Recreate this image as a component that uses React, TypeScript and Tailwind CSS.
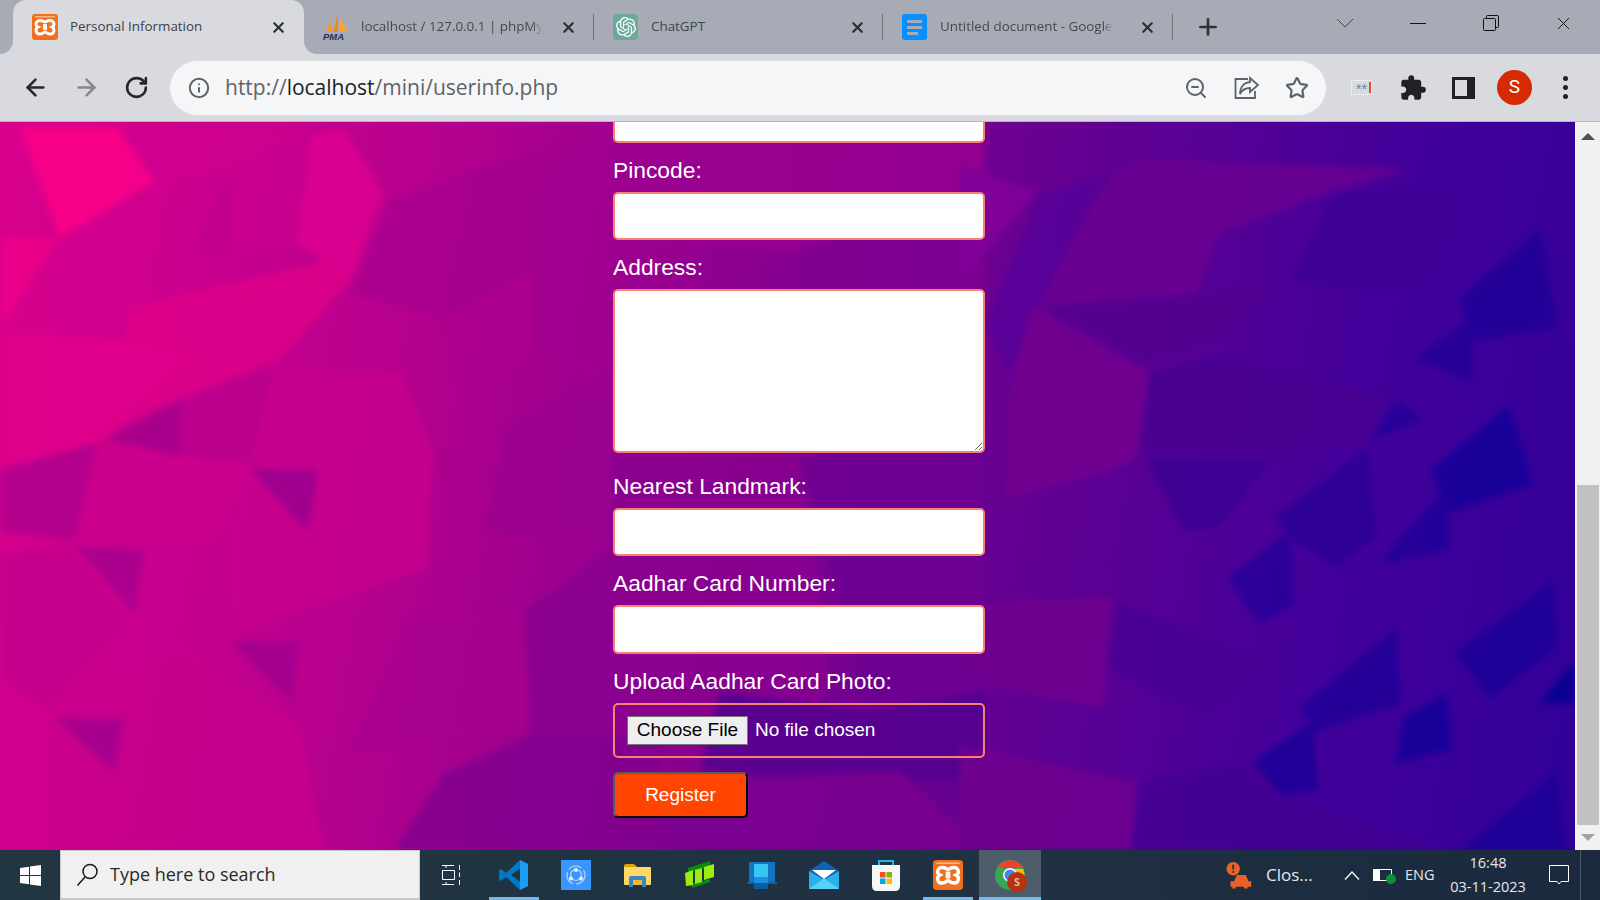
import type { ReactNode } from 'react';
import { ArrowLeft, ArrowRight, Info, Plus, RotateCw, Star, X, ZoomOut } from 'lucide-react';
import { MdExtension } from 'react-icons/md';
import { SiOpenai } from 'react-icons/si';

const uiFont = "font-['Open_Sans','Noto_Sans',sans-serif]";

// page background: [points, colour]
const shards: [string, string][] = [
  // mid tone facets
  ['117,5 323,5 233,47 154,60', '#d0008f'],
  ['230,47 323,14 296,121 230,130', '#ca008e'],
  ['191,130 230,51 230,130', '#c0008e'],
  ['54,135 146,79 125,205 51,207', '#d0008e'],
  ['475,47 610,9 610,261 440,196', '#a2008f'],
  ['440,196 531,149 531,233 444,261', '#ad0090'],
  ['506,303 610,251 610,419 486,410', '#9a0090'],
  ['409,493 525,489 529,610 350,629', '#a8008f'],
  ['97,321 249,345 218,419 74,419', '#cc008c'],
  ['272,247 400,251 432,326 428,447 233,512 226,419 249,345', '#c8008e'],
  ['50,596 179,521 300,605 323,729 50,729', '#c8008c'],
  ['0,430 70,424 130,500 50,590 0,560', '#c4008c'],
  ['610,0 985,0 985,70 830,130 620,120', '#9c0090'],
  ['800,125 985,80 985,330 800,330', '#7f0090'],
  ['610,330 800,340 830,560 740,720 610,720', '#8a0090'],
  ['800,340 985,280 985,620 880,620', '#6d0092'],
  ['720,570 870,590 985,570 985,660 810,660 700,650', '#52008f'],
  ['620,660 900,650 985,729 640,729', '#7a0090'],
  // the strong shapes
  ['19,5 117,5 154,60 58,116', '#ff0088'],
  ['0,116 58,116 0,205', '#f00088'],
  ['128,186 342,135 350,158 280,237 109,303', '#e00088'],
  ['0,210 148,219 195,233 100,320 0,345', '#e2008a'],
  ['311,14 342,5 383,70 350,158 296,121', '#e00090'],
  ['249,347 317,349 307,410', '#98008f'],
  ['74,424 144,428 134,493', '#a5008f'],
  ['230,520 298,520 292,582', '#a0008f'],
  ['54,596 123,598 113,652', '#a0008f'],
  ['105,317 179,279 179,335', '#a0008c'],
  ['179,279 272,247 249,340 179,335', '#b8008d'],
  ['0,349 97,321 74,419 0,410', '#ad008d'],
  ['350,172 440,196 475,47 389,79', '#a8008f'],
  ['525,489 610,428 610,615 529,615', '#880090'],
  ['444,652 529,615 660,615 660,730 393,730', '#80008f'],
  ['960,42 1036,70 960,163', '#85009a'],
  ['1142,37 1412,47 1330,70 1220,112 1197,172 1040,182 1110,56', '#6c0090'],
  ['1040,74 1110,51 1036,186 1009,251 985,205', '#55009a'],
  ['1334,74 1471,60 1432,154 1377,172 1291,158', '#3d0095'],
  ['1044,186 1271,168 1216,219 1142,242', '#52008f'],
  ['1032,186 1150,251 1138,335 1114,349 1005,377 1012,261', '#75008f'],
  ['1150,251 1216,233 1385,275 1369,321 1271,335 1142,330', '#480090'],
  ['1146,335 1271,340 1220,405 1185,410', '#3a0092'],
  ['1275,396 1369,326 1377,414 1338,447 1295,419', '#2a0096'],
  ['1228,456 1291,410 1295,484 1260,503', '#25009a'],
  ['1432,349 1510,284 1534,363 1448,391', '#12009a'],
  ['1381,442 1448,363 1450,428', '#1e009a'],
  ['1460,177 1542,107 1558,205 1475,219', '#1e0098'],
  ['1416,237 1473,196 1473,261', '#220098'],
  ['1299,587 1397,507 1401,582 1318,610', '#1f0098'],
  ['1256,638 1314,600 1318,670 1267,675', '#180098'],
  ['1456,531 1554,461 1558,526 1491,577', '#1a0098'],
  ['1542,582 1575,540 1575,582', '#000090'],
  ['1405,596 1448,573 1452,628 1397,642', '#10009a'],
  ['1460,730 1558,652 1565,730', '#1a0098'],
  ['1373,317 1397,279 1424,298', '#20009a'],
  ['960,484 1114,475 1103,587 960,559', '#72008f'],
  ['960,624 1138,661 1130,730 960,730', '#72008f'],
  ['1118,480 1267,540 1205,596 1107,545', '#480094'],
  ['1142,661 1252,638 1283,675 1456,730 1134,730', '#430092'],
];

function Xampp({ size }: { size: number }) {
  return (
    <svg width={size} height={size} viewBox="0 0 26 26">
      <rect width="26" height="26" rx="3" fill="#f0701f" />
      <rect x="3" y="2" width="20" height="1.500" fill="#f8b48a" />
      <path
        d="M8 6.500C11 6.500 12 8 13 8C14 8 15 6.500 18 6.500C21 6.500 22 9 22 10.500C22 12 20 13 20 13C20 13 22 14 22 16C22 18 21 20 18 20C15 20 14 18 13 18C12 18 11 20 8 20C5 20 4 18 4 16C4 14 6 13 6 13C6 13 4 12 4 10.500C4 9 5 6.500 8 6.500Z"
        fill="none"
        stroke="#fff"
        strokeWidth="3"
      />
      <path d="M11 13H15" stroke="#fff" strokeWidth="6" />
    </svg>
  );
}

function Pma() {
  return (
    <svg width="27" height="28" viewBox="0 0 27 28">
      <path d="M3 19L9 6V19Z" fill="#f59a23" />
      <path d="M10 19L15 1V19Z" fill="#f08a1d" />
      <path d="M16 3L25 19H16Z" fill="#f7a52e" />
      <text x="0" y="27" fontSize="9.500" fontWeight="700" fontStyle="italic" fill="#27305f" fontFamily="Liberation Sans">
        PMA
      </text>
    </svg>
  );
}

function ChatGptIcon() {
  return (
    <div className="flex h-[26px] w-[25px] items-center justify-center rounded-[4px] bg-[#6aa99b]">
      <SiOpenai className="h-[20px] w-[20px] text-white" />
    </div>
  );
}

function DocsIcon() {
  return (
    <div className="flex h-[26px] w-[25px] flex-col justify-center gap-[3px] rounded-[3px] bg-[#0a8fff] pl-[5px]">
      <div className="h-[3px] w-[15px] bg-[#a8abb6]" />
      <div className="h-[3px] w-[15px] bg-[#a8abb6]" />
      <div className="h-[3px] w-[11px] bg-[#a8abb6]" />
    </div>
  );
}

function Tab({ icon, title, width, active, sep, fade }: { icon: ReactNode; title: string; width: string; active?: boolean; sep?: boolean; fade?: boolean }) {
  return (
    <div className={`relative flex h-[54px] items-center pl-[19px] ${width} ${active ? 'rounded-t-[13px] bg-[#d9dae0]' : ''}`}>
      {active && (
        <>
          <svg className="absolute bottom-0 left-[-13px]" width="13" height="13"><path d="M0 13A13 13 0 0 0 13 0V13Z" fill="#d9dae0" /></svg>
          <svg className="absolute bottom-0 right-[-13px]" width="13" height="13"><path d="M13 13A13 13 0 0 1 0 0V13Z" fill="#d9dae0" /></svg>
        </>
      )}
      <div className="w-[26px] shrink-0">{icon}</div>
      <div className={`mb-[1px] ml-[12px] text-[13.400px] whitespace-nowrap ${active ? 'text-[#3c4043]' : 'text-[#42454c]'} ${uiFont}`}>
        <span className={fade ? 'block bg-[linear-gradient(90deg,#42454c_94%,transparent)] bg-clip-text text-transparent' : ''}>{title}</span>
      </div>
      <X className="absolute right-[17px] top-[19px] h-[17px] w-[17px] text-[#2b2e33]" strokeWidth={3} />
      {sep && <div className="absolute right-0 top-[14px] h-[26px] w-[1.500px] bg-[#6f727b]" />}
    </div>
  );
}

function TitleBar() {
  return (
    <div className="flex h-[54px] items-center bg-[#a7abb6] pl-[13px]">
      <Tab icon={<Xampp size={26} />} title="Personal Information" width="w-[291px]" active />
      <Tab icon={<Pma />} title="localhost / 127.0.0.1 | phpMy" width="w-[290px]" sep fade />
      <Tab icon={<ChatGptIcon />} title="ChatGPT" width="w-[289px]" sep />
      <Tab icon={<DocsIcon />} title="Untitled document - Google" width="w-[290px]" sep fade />
      <Plus className="ml-[22px] h-[26px] w-[26px] text-[#2f3237]" strokeWidth={2.500} />
      <svg className="ml-[115px] mt-[-8px]" width="18" height="10" viewBox="0 0 18 10"><path d="M1 1L9 9L17 1" fill="none" stroke="#42454c" /></svg>
      <div className="ml-[56px] mt-[-8px] h-[1px] w-[16px] bg-[#111]" />
      <svg className="ml-[57px] mt-[-8px]" width="16" height="16" viewBox="0 0 16 16">
        <rect x="0.500" y="3.500" width="12" height="12" rx="1" fill="none" stroke="#111" />
        <path d="M3.500 3.500V1.500Q3.500 0.500 4.500 0.500H14.500Q15.500 0.500 15.500 1.500V11.500Q15.500 12.500 14.500 12.500H12.500" fill="none" stroke="#111" />
      </svg>
      <X className="ml-[54px] mt-[-8px] h-[21px] w-[21px] text-[#111]" strokeWidth={1.100} />
    </div>
  );
}

function ToolBar() {
  return (
    <div className="flex h-[68px] items-center border-b border-[#b4b5bb] bg-[#d9dae0] pl-[22px]">
      <ArrowLeft className="h-[27px] w-[27px] text-[#26282c]" strokeWidth={2.200} />
      <ArrowRight className="ml-[24px] h-[27px] w-[27px] text-[#85878c]" strokeWidth={2.200} />
      <RotateCw className="ml-[24px] h-[25px] w-[25px] text-[#26282c]" strokeWidth={2.500} />
      <div className="ml-[21px] flex h-[54px] w-[1156px] items-center rounded-full bg-[#f5f6f8] pl-[18px] pr-[17px]">
        <Info className="h-[22px] w-[22px] text-[#5f6368]" strokeWidth={2.200} />
        <div className={`ml-[15px] text-[21px] text-[#5f6368] ${uiFont}`}>
          http://<span className="text-[#202124]">localhost</span>/mini/userinfo.php
        </div>
        <ZoomOut className="ml-auto h-[24px] w-[24px] text-[#5f6368]" strokeWidth={2} />
        <svg className="ml-[26px]" width="26" height="24" viewBox="0 0 26 24" fill="none" stroke="#5f6368" strokeWidth="1.800">
          <path d="M14 3H1.500V22H21V15" />
          <path d="M16 2L24 9L16 16V12C11 12 8 14 6 18C6 11 10 6.500 16 6Z" />
        </svg>
        <Star className="ml-[25px] h-[24px] w-[24px] text-[#5f6368]" strokeWidth={2.200} />
      </div>
      <div className="ml-[25px] flex h-[15px] w-[21px] items-center justify-end gap-[2px] overflow-hidden border border-dotted border-white text-[14px] leading-[14px] text-[#5a8aa0]">
        <span className="pt-[3px] font-['Liberation_Sans',sans-serif]">**</span>
        <span className="h-[11px] w-[2px] shrink-0 bg-[#f04030]" />
      </div>
      <MdExtension className="ml-[27px] h-[28px] w-[28px] text-[#202124]" />
      <div className="ml-[25px] flex h-[22px] w-[23px] justify-end border-[3px] border-[#202124]">
        <div className="w-[5px] bg-[#202124]" />
      </div>
      <div className="ml-[22px] flex h-[35px] w-[35px] items-center justify-center rounded-full bg-[#d62a02] text-[19px] text-white font-['Roboto',sans-serif]">S</div>
      <div className="ml-[31px] flex flex-col gap-[4px]">
        <div className="h-[5px] w-[5px] rounded-full bg-[#202124]" />
        <div className="h-[5px] w-[5px] rounded-full bg-[#202124]" />
        <div className="h-[5px] w-[5px] rounded-full bg-[#202124]" />
      </div>
    </div>
  );
}

function Field({ label, children }: { label: string; children: ReactNode }) {
  return (
    <>
      <label className="block pb-[9px] pt-[14px] text-[22.800px] leading-[26px] text-white font-['Liberation_Sans',sans-serif]">{label}</label>
      {children}
    </>
  );
}

const inputBox = 'block w-[372px] rounded-[5px] border-2 border-[#fa8072] bg-white';

function PageForm() {
  return (
    <form className="ml-[613px] w-[372px] font-['Liberation_Sans',sans-serif]">
      <div className="h-[21px] w-[372px] rounded-b-[5px] border-2 border-t-0 border-[#fa8072] bg-white" />
      <Field label="Pincode:">
        <input type="text" className={`${inputBox} h-[48px]`} />
      </Field>
      <Field label="Address:">
        <textarea className={`${inputBox} h-[164px]`} />
      </Field>
      <div className="h-[6px]" />
      <Field label="Nearest Landmark:">
        <input type="text" className={`${inputBox} h-[48px]`} />
      </Field>
      <Field label="Aadhar Card Number:">
        <input type="text" className={`${inputBox} h-[49px]`} />
      </Field>
      <Field label="Upload Aadhar Card Photo:">
        <label className="flex h-[55px] w-[372px] items-center rounded-[5px] border-2 border-[#fa8072] pl-[12px] text-[19px] text-white">
          <input type="file" className="hidden" />
          <span className="flex h-[29px] w-[121px] items-center justify-center border border-[#767676] bg-[#efefef] text-black">Choose File</span>
          <span className="ml-[7px]">No file chosen</span>
        </label>
      </Field>
      <button type="button" className="mt-[14px] block h-[46px] w-[135px] rounded-[5px] border-2 border-b-black border-l-[#5c5c5c] border-r-black border-t-[#5c5c5c] bg-[#ff4500] text-[19px] text-white">
        Register
      </button>
    </form>
  );
}

function Scrollbar() {
  return (
    <div className="flex h-full w-[25px] shrink-0 flex-col items-center bg-[#f1f1f1]">
      <div className="flex h-[25px] items-center justify-center pt-[3px]">
        <div className="h-0 w-0 border-x-[7px] border-b-[7px] border-x-transparent border-b-[#505050]" />
      </div>
      <div className="flex-1" />
      <div className="h-[340px] w-[22px] bg-[#c1c1c1]" />
      <div className="flex h-[25px] items-center justify-center">
        <div className="h-0 w-0 border-x-[7px] border-t-[7px] border-x-transparent border-t-[#a3a3a3]" />
      </div>
    </div>
  );
}

function Slot({ children, on, active }: { children: ReactNode; on?: boolean; active?: boolean }) {
  return (
    <div className={`relative flex h-[50px] w-[62px] shrink-0 items-center justify-center ${active ? 'bg-[#4e5d6a]' : ''}`}>
      {children}
      {on && <div className={`absolute bottom-0 h-[3px] bg-[#76b9ed] ${active ? 'inset-x-0' : 'inset-x-[6px]'}`} />}
    </div>
  );
}

function VsCode() {
  return (
    <svg width="30" height="32" viewBox="0 0 30 32">
      <path d="M21 1L29 5V27L21 31L7 18L2 22L0 20.500V11.500L2 10L7 14Z" fill="#0078c8" />
      <path d="M21 1L29 5V27L21 31Z" fill="#1a9cf0" />
      <path d="M21 9.500L12 16L21 22.500Z" fill="#21333f" />
    </svg>
  );
}

function Taskbar() {
  return (
    <div className={`flex h-[50px] items-center bg-[linear-gradient(90deg,#213641,#1f3142_60%,#1b2a3f)] ${uiFont}`}>
      <div className="flex h-[50px] w-[60px] items-center justify-center">
        <svg width="21" height="21" viewBox="0 0 21 21" fill="#fff">
          <path d="M0 3L9 1.700V10H0ZM10 1.500L21 0V10H10ZM0 11H9V19.300L0 18ZM10 11H21V21L10 19.500Z" />
        </svg>
      </div>
      <div className="flex h-[50px] w-[360px] items-center border border-b-2 border-[#c8c8c8] bg-[#f0f0f0] pl-[15px]">
        <svg width="22" height="24" viewBox="0 0 22 24" fill="none" stroke="#1a1a1a" strokeWidth="1.500">
          <circle cx="14" cy="8.500" r="7" />
          <path d="M9 14L1.500 22.500" />
        </svg>
        <span className="ml-[12px] text-[18px] text-[#2a2a2a]">Type here to search</span>
      </div>
      <div className="flex w-[63px] justify-center">
        <svg width="20" height="20" viewBox="0 0 20 20" fill="none" stroke="#fff">
          <path d="M0 .5H12M4 .5V3M0 19.500H12M4 19.500V17M.5 5.500H12.500V14.500H.5ZM17.500 0V5M17.500 7.500V12M17.500 15V20" />
        </svg>
      </div>
      <Slot on><VsCode /></Slot>
      <Slot>
        <div className="flex h-[30px] w-[30px] items-center justify-center bg-[#3a96ff]">
          <svg width="24" height="24" viewBox="0 0 24 24" fill="none" stroke="#b8d8ff" strokeWidth="1.200">
            <circle cx="12" cy="12" r="9" strokeDasharray="14 3" />
            <circle cx="12" cy="12" r="5.500" />
            <circle cx="12" cy="7" r="2" fill="#e8f2ff" stroke="none" />
            <circle cx="7" cy="15.500" r="2" fill="#e8f2ff" stroke="none" />
            <circle cx="17" cy="15.500" r="2" fill="#e8f2ff" stroke="none" />
          </svg>
        </div>
      </Slot>
      <Slot>
        <svg width="28" height="24" viewBox="0 0 28 24">
          <path d="M0 3Q0 1 2 1H10L13 4V8H0Z" fill="#e0a10f" />
          <path d="M0 4H26Q27 4 27 5V21Q27 22 26 22H1Q0 22 0 21Z" fill="#ffd968" />
          <path d="M5 24V15Q5 13 7 13H20Q22 13 22 15V24H18V17H9V24Z" fill="#3b86c8" />
          <rect x="9" y="17" width="9" height="5" fill="#f2b631" />
        </svg>
      </Slot>
      <Slot>
        <svg width="30" height="30" viewBox="0 0 30 30">
          <path d="M3 8L25 1V7L3 13Z" fill="#0b8a0b" />
          <path d="M4 24L25 19V22L8 28Z" fill="#0b8a0b" />
          <path d="M0 13L8 10V25L1 26ZM10 10L17 8V22L10 24ZM19 7L29 4V17L19 20Z" fill="#9ced0e" />
        </svg>
      </Slot>
      <Slot>
        <svg width="30" height="28" viewBox="0 0 30 28">
          <path d="M2 1H28V21H2Z" fill="#0f74c4" />
          <path d="M0 21H30V23H0Z" fill="#0b5fa0" />
          <path d="M7 3H21V16H7Z" fill="#36c6f5" />
          <path d="M7 16H21V22H7Z" fill="#1e8fe0" />
          <path d="M7 22H21V28H7Z" fill="#0c5c9e" />
        </svg>
      </Slot>
      <Slot>
        <svg width="30" height="28" viewBox="0 0 30 28">
          <path d="M0 10L15 0L30 10V28H0Z" fill="#0f62b0" />
          <path d="M3 9H27L15 18Z" fill="#fff" />
          <path d="M0 10L15 19L30 10V28H0Z" fill="#2bb1ea" />
          <path d="M0 28L15 17L30 28Z" fill="#55d2f7" />
        </svg>
      </Slot>
      <Slot>
        <svg width="30" height="31" viewBox="0 0 30 31">
          <path d="M8 5V1H22V5" fill="none" stroke="#28b6ea" strokeWidth="2" />
          <path d="M1 5H29V26Q29 31 24 31H6Q1 31 1 26Z" fill="#f7f7f7" />
          <rect x="9" y="12" width="5.500" height="5.500" fill="#f25022" />
          <rect x="15.500" y="12" width="5.500" height="5.500" fill="#7fba00" />
          <rect x="9" y="18.500" width="5.500" height="5.500" fill="#00a4ef" />
          <rect x="15.500" y="18.500" width="5.500" height="5.500" fill="#ffb900" />
        </svg>
      </Slot>
      <Slot on><Xampp size={30} /></Slot>
      <Slot on active>
        <div className="relative h-[30px] w-[30px]">
          <svg width="30" height="30" viewBox="0 0 30 30">
            <circle cx="15" cy="15" r="15" fill="#34a853" />
            <path d="M3 7A15 15 0 0 1 28 7L15 9Z" fill="#ea4335" />
            <path d="M15 9H28A15 15 0 0 1 18 30Z" fill="#fbbc05" />
            <circle cx="15" cy="15" r="7" fill="#fff" />
            <circle cx="15" cy="15" r="5.500" fill="#4285f4" />
          </svg>
          <div className="absolute left-[12px] top-[12px] flex h-[20px] w-[20px] items-center justify-center rounded-full bg-[#b8320e] text-[11px] font-bold text-[#e8b8a8]">S</div>
        </div>
      </Slot>
      <div className="ml-[185px] flex w-[27px] justify-center">
        <svg width="30" height="30" viewBox="0 0 30 30">
          <circle cx="8" cy="8" r="7.500" fill="#e8622a" />
          <path d="M8 3.500V9M8 10.500V12.500" stroke="#1f3142" strokeWidth="2" />
          <path d="M9 22L12 15H22L25 22H28V28H24V30H20V28H11V30H7V28H5V22Z" fill="#e8622a" />
        </svg>
      </div>
      <span className="ml-[13px] w-[47px] text-[17px] whitespace-nowrap text-[#e4e8ec]">Clos...</span>
      <svg className="ml-[31px]" width="16" height="9" viewBox="0 0 16 9"><path d="M1 8.500L8 1L15 8.500" fill="none" stroke="#fff" strokeWidth="1.200" /></svg>
      <div className="relative ml-[13px] h-[12px] w-[19px] border border-white">
        <div className="h-full w-[6px] bg-white" />
        <div className="absolute -right-[5px] top-[4px] h-[10px] w-[10px] rounded-full bg-[#0d8f3c]" />
      </div>
      <span className="ml-[13px] text-[14.500px] text-[#e4e8ec]">ENG</span>
      <div className="ml-[16px] flex w-[75px] flex-col items-center gap-[4px] text-[14.500px] leading-[20px] text-[#e4e8ec]">
        <span>16:48</span>
        <span className="whitespace-nowrap">03-11-2023</span>
      </div>
      <svg className="ml-[23px]" width="20" height="20" viewBox="0 0 20 20" fill="none" stroke="#fff">
        <path d="M.5 .5H19.500V16.500H12L10 19L8 16.500H.5Z" />
      </svg>
      <div className="ml-[11px] h-[50px] w-px bg-[#4a5a68]" />
    </div>
  );
}

export default function App() {
  return (
    <div className="flex h-[900px] w-[1600px] flex-col overflow-hidden">
      <TitleBar />
      <ToolBar />
      <div className="flex h-[728px]">
        <main className="relative h-full w-[1575px] overflow-hidden bg-[linear-gradient(100deg,#d8008c,#cc008e_12%,#b8008e_25%,#98008f_40%,#7c0090_52%,#650092_63%,#44009a_82%,#300098)]">
          <svg className="absolute inset-0 opacity-80 blur-[3px]" width="1575" height="728" viewBox="0 0 1575 729">
            {shards.map(([points, fill]) => (
              <polygon key={points} points={points} fill={fill} />
            ))}
          </svg>
          <div className="relative">
            <PageForm />
          </div>
        </main>
        <Scrollbar />
      </div>
      <Taskbar />
    </div>
  );
}
